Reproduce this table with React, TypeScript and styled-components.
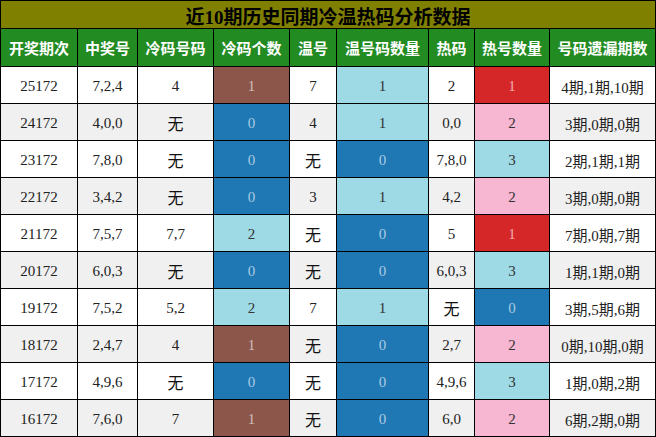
import React from "react";
import styled, { createGlobalStyle } from "styled-components";

const Global = createGlobalStyle`
  html, body { margin: 0; padding: 0; background: #ffffff; }
  body { font-family: "Liberation Serif", "Noto Sans CJK SC", serif; }
`;

const Grid = styled.div`
  display: grid;
  grid-template-columns: 76px 59px 75px 75px 46px 91px 45px 74px 105px;
  grid-template-rows: 27px 37px repeat(10, 36px);
  gap: 1px;
  padding: 1px;
  background: #000000;
  width: 654px;
`;

const Title = styled.div`
  grid-column: 1 / -1;
  background: #808000;
  color: #000000;
  font-family: "Liberation Serif", "Noto Sans CJK SC", serif;
  font-weight: 700;
  font-size: 19px;
  display: flex;
  align-items: center;
  justify-content: center;
  padding-top: 1px;
`;

const Head = styled.div`
  background: #228b22;
  color: #ffffff;
  font-family: "Noto Sans CJK SC", sans-serif;
  font-weight: 700;
  font-size: 15px;
  display: flex;
  align-items: center;
  justify-content: center;
  white-space: nowrap;
`;

type Tone = "blue" | "brown" | "red" | "pink" | "cyan" | undefined;

const toneBg: Record<string, string> = {
  blue: "#1f77b4",
  brown: "#8c564b",
  red: "#d62728",
  pink: "#f7b6d2",
  cyan: "#9edae5",
};

const toneFg: Record<string, string> = {
  blue: "rgba(255,255,255,0.62)",
  brown: "rgba(255,255,255,0.62)",
  red: "rgba(255,255,255,0.62)",
  pink: "#333333",
  cyan: "#333333",
};

const Cell = styled.div<{ $alt: boolean; $tone?: Tone }>`
  background: ${(p) => (p.$tone ? toneBg[p.$tone] : p.$alt ? "#f0f0f0" : "#ffffff")};
  color: ${(p) => (p.$tone ? toneFg[p.$tone] : "#222222")};
  font-family: "Liberation Serif", "Noto Sans CJK SC", serif;
  font-size: 15px;
  display: flex;
  align-items: center;
  justify-content: center;
  padding-top: 2px;
  white-space: nowrap;
`;

const None = styled.span`
  font-family: "Noto Sans CJK SC", sans-serif;
  font-size: 16px;
  color: #111111;
`;

type Row = {
  period: string;
  win: string;
  cold: string;
  coldN: [string, Tone];
  warm: string;
  warmN: [string, Tone];
  hot: string;
  hotN: [string, Tone];
  miss: string;
};

const rows: Row[] = [
  { period: "25172", win: "7,2,4", cold: "4", coldN: ["1", "brown"], warm: "7", warmN: ["1", "cyan"], hot: "2", hotN: ["1", "red"], miss: "4期,1期,10期" },
  { period: "24172", win: "4,0,0", cold: "无", coldN: ["0", "blue"], warm: "4", warmN: ["1", "cyan"], hot: "0,0", hotN: ["2", "pink"], miss: "3期,0期,0期" },
  { period: "23172", win: "7,8,0", cold: "无", coldN: ["0", "blue"], warm: "无", warmN: ["0", "blue"], hot: "7,8,0", hotN: ["3", "cyan"], miss: "2期,1期,1期" },
  { period: "22172", win: "3,4,2", cold: "无", coldN: ["0", "blue"], warm: "3", warmN: ["1", "cyan"], hot: "4,2", hotN: ["2", "pink"], miss: "3期,0期,0期" },
  { period: "21172", win: "7,5,7", cold: "7,7", coldN: ["2", "cyan"], warm: "无", warmN: ["0", "blue"], hot: "5", hotN: ["1", "red"], miss: "7期,0期,7期" },
  { period: "20172", win: "6,0,3", cold: "无", coldN: ["0", "blue"], warm: "无", warmN: ["0", "blue"], hot: "6,0,3", hotN: ["3", "cyan"], miss: "1期,1期,0期" },
  { period: "19172", win: "7,5,2", cold: "5,2", coldN: ["2", "cyan"], warm: "7", warmN: ["1", "cyan"], hot: "无", hotN: ["0", "blue"], miss: "3期,5期,6期" },
  { period: "18172", win: "2,4,7", cold: "4", coldN: ["1", "brown"], warm: "无", warmN: ["0", "blue"], hot: "2,7", hotN: ["2", "pink"], miss: "0期,10期,0期" },
  { period: "17172", win: "4,9,6", cold: "无", coldN: ["0", "blue"], warm: "无", warmN: ["0", "blue"], hot: "4,9,6", hotN: ["3", "cyan"], miss: "1期,0期,2期" },
  { period: "16172", win: "7,6,0", cold: "7", coldN: ["1", "brown"], warm: "无", warmN: ["0", "blue"], hot: "6,0", hotN: ["2", "pink"], miss: "6期,2期,0期" },
];

const headers = ["开奖期次", "中奖号", "冷码号码", "冷码个数", "温号", "温号码数量", "热码", "热号数量", "号码遗漏期数"];

const txt = (s: string) => (s === "无" ? <None>无</None> : s);

export default function App() {
  return (
    <>
      <Global />
      <Grid>
        <Title>近10期历史同期冷温热码分析数据</Title>
        {headers.map((h) => (
          <Head key={h}>{h}</Head>
        ))}
        {rows.map((r, i) => {
          const alt = i % 2 === 1;
          return (
            <React.Fragment key={r.period}>
              <Cell $alt={alt}>{r.period}</Cell>
              <Cell $alt={alt}>{r.win}</Cell>
              <Cell $alt={alt}>{txt(r.cold)}</Cell>
              <Cell $alt={alt} $tone={r.coldN[1]}>{r.coldN[0]}</Cell>
              <Cell $alt={alt}>{txt(r.warm)}</Cell>
              <Cell $alt={alt} $tone={r.warmN[1]}>{r.warmN[0]}</Cell>
              <Cell $alt={alt}>{txt(r.hot)}</Cell>
              <Cell $alt={alt} $tone={r.hotN[1]}>{r.hotN[0]}</Cell>
              <Cell $alt={alt}>{r.miss}</Cell>
            </React.Fragment>
          );
        })}
      </Grid>
    </>
  );
}
